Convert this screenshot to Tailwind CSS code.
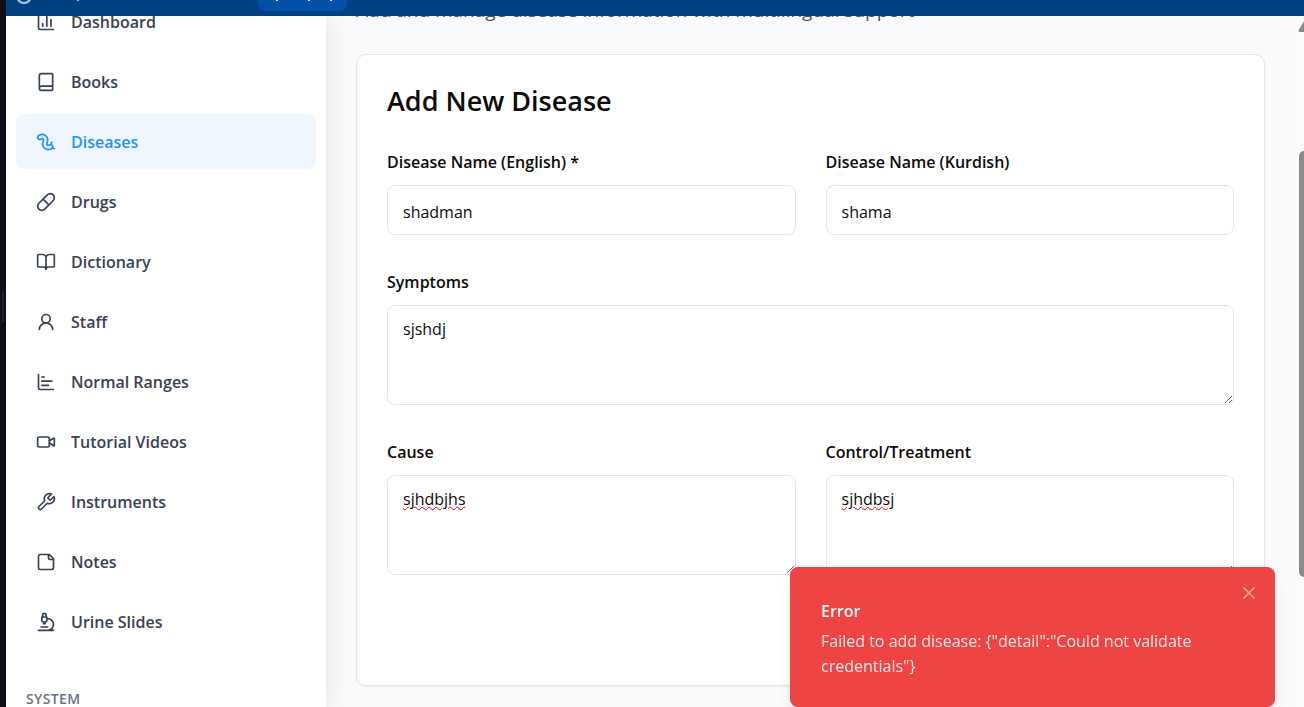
<!DOCTYPE html>
<html lang="en">
<head>
<meta charset="utf-8">
<title>Diseases</title>
<script src="https://cdn.jsdelivr.net/npm/@tailwindcss/browser@4"></script>
</head>
<body class="flex h-screen overflow-hidden bg-[#f9fafb] font-['Segoe_UI','Open_Sans',sans-serif] text-base text-[#0c0a09]">
<div class="flex w-[6px] shrink-0 flex-col justify-center bg-[#0f0f17] pb-[94px] pl-[2px]"><span class="h-[30px] w-[2px] bg-[#23232c]"></span></div>
<div class="flex min-w-0 flex-1 flex-col">
  <header class="relative z-10 flex h-4 shrink-0 items-end overflow-hidden bg-[#004281] pb-[5px] text-white">
    <div class="flex w-[252px] shrink-0 items-end gap-[45px] pl-[10px]">
      <svg class="mb-[7px] size-4 shrink-0" viewBox="0 0 16 16" fill="none" stroke="#a9cdf0" stroke-width="2" aria-hidden="true"><circle cx="8" cy="8" r="7"/></svg>
      <span class="mb-[10px] h-1 w-[2px] bg-[#a9bfd6]"></span>
    </div>
    <button type="button" aria-label="Menu" class="flex h-10 w-[89px] shrink-0 items-end rounded-lg bg-[#0052a8] pb-[10px] pl-[18px]">
      <svg class="h-1 w-[60px]" viewBox="0 0 60 4" stroke="#d5e2f0" stroke-width="2"><path d="M1 0V4M33 0V4M55 0V4"/></svg>
    </button>
  </header>
  <div class="flex min-h-0 flex-1">
    <aside class="relative z-1 w-80 shrink-0 overflow-hidden bg-white shadow-[0_0_25px_rgba(0,0,0,0.1)]">
      <nav class="-mt-[22px] flex flex-col gap-[5px] px-[10px] font-semibold text-[#374151]">
        <a href="#" class="flex h-[55px] items-center gap-[15px] rounded-lg px-5 leading-[25px]"><svg class="size-5 shrink-0" viewBox="0 0 24 24" fill="none" stroke="currentColor" stroke-width="2" stroke-linecap="round" stroke-linejoin="round"><path d="M3 3v16a2 2 0 0 0 2 2h16M18 17V9M13 17V5M8 17v-3"/></svg><span class="pt-px">Dashboard</span></a>
        <a href="#" class="flex h-[55px] items-center gap-[15px] rounded-lg px-5 leading-[25px]"><svg class="size-5 shrink-0" viewBox="0 0 24 24" fill="none" stroke="currentColor" stroke-width="2" stroke-linecap="round" stroke-linejoin="round"><path d="M4 19.5v-15A2.5 2.5 0 0 1 6.5 2H19a1 1 0 0 1 1 1v18a1 1 0 0 1-1 1H6.5a1 1 0 0 1 0-5H20"/></svg><span class="pt-px">Books</span></a>
        <a href="#" class="flex h-[55px] items-center gap-[15px] rounded-lg bg-[#eff6ff] px-5 leading-[25px] text-[#1e90ff]"><svg class="size-5 shrink-0" viewBox="0 0 24 24" fill="none" stroke="currentColor" stroke-width="2" stroke-linecap="round" stroke-linejoin="round"><path d="m19 12-1.5 3M19.63 18.81 22 20M6.47 8.23a1.68 1.68 0 0 1 2.44 1.93l-.64 2.08a6.76 6.76 0 0 0 10.16 7.67l.42-.27a1 1 0 1 0-2.73-4.21l-.42.27a1.76 1.76 0 0 1-2.63-1.99l.64-2.08A6.66 6.66 0 0 0 3.94 3.9l-.7.4a1 1 0 1 0 2.55 4.34z"/></svg><span class="pt-px">Diseases</span></a>
        <a href="#" class="flex h-[55px] items-center gap-[15px] rounded-lg px-5 leading-[25px]"><svg class="size-5 shrink-0" viewBox="0 0 24 24" fill="none" stroke="currentColor" stroke-width="2" stroke-linecap="round" stroke-linejoin="round"><path d="m10.5 20.5 10-10a4.95 4.95 0 1 0-7-7l-10 10a4.95 4.95 0 1 0 7 7ZM8.5 8.5l7 7"/></svg><span class="pt-px">Drugs</span></a>
        <a href="#" class="flex h-[55px] items-center gap-[15px] rounded-lg px-5 leading-[25px]"><svg class="size-5 shrink-0" viewBox="0 0 24 24" fill="none" stroke="currentColor" stroke-width="2" stroke-linecap="round" stroke-linejoin="round"><path d="M12 7v14M3 18a1 1 0 0 1-1-1V4a1 1 0 0 1 1-1h5a4 4 0 0 1 4 4 4 4 0 0 1 4-4h5a1 1 0 0 1 1 1v13a1 1 0 0 1-1 1h-6a3 3 0 0 0-3 3 3 3 0 0 0-3-3z"/></svg><span class="pt-px">Dictionary</span></a>
        <a href="#" class="flex h-[55px] items-center gap-[15px] rounded-lg px-5 leading-[25px]"><svg class="size-5 shrink-0" viewBox="0 0 24 24" fill="none" stroke="currentColor" stroke-width="2" stroke-linecap="round" stroke-linejoin="round"><circle cx="12" cy="8" r="5"/><path d="M20 21a8 8 0 0 0-16 0"/></svg><span class="pt-px">Staff</span></a>
        <a href="#" class="flex h-[55px] items-center gap-[15px] rounded-lg px-5 leading-[25px]"><svg class="size-5 shrink-0" viewBox="0 0 24 24" fill="none" stroke="currentColor" stroke-width="2" stroke-linecap="round" stroke-linejoin="round"><path d="M3 3v16a2 2 0 0 0 2 2h16M7 16h8M7 11h12M7 6h3"/></svg><span class="pt-px">Normal Ranges</span></a>
        <a href="#" class="flex h-[55px] items-center gap-[15px] rounded-lg px-5 leading-[25px]"><svg class="size-5 shrink-0" viewBox="0 0 24 24" fill="none" stroke="currentColor" stroke-width="2" stroke-linecap="round" stroke-linejoin="round"><path d="m16 13 5.223 3.482a.5.5 0 0 0 .777-.416V7.87a.5.5 0 0 0-.752-.432L16 10.5"/><rect x="2" y="6" width="14" height="12" rx="2"/></svg><span class="pt-px">Tutorial Videos</span></a>
        <a href="#" class="flex h-[55px] items-center gap-[15px] rounded-lg px-5 leading-[25px]"><svg class="size-5 shrink-0" viewBox="0 0 24 24" fill="none" stroke="currentColor" stroke-width="2" stroke-linecap="round" stroke-linejoin="round"><path d="M14.7 6.3a1 1 0 0 0 0 1.4l1.6 1.6a1 1 0 0 0 1.4 0l3.77-3.77a6 6 0 0 1-7.94 7.94l-6.91 6.91a2.12 2.12 0 0 1-3-3l6.91-6.91a6 6 0 0 1 7.94-7.94l-3.76 3.76z"/></svg><span class="pt-px">Instruments</span></a>
        <a href="#" class="flex h-[55px] items-center gap-[15px] rounded-lg px-5 leading-[25px]"><svg class="size-5 shrink-0" viewBox="0 0 24 24" fill="none" stroke="currentColor" stroke-width="2" stroke-linecap="round" stroke-linejoin="round"><path d="M16 3H5a2 2 0 0 0-2 2v14a2 2 0 0 0 2 2h14a2 2 0 0 0 2-2V8ZM15 3v4a2 2 0 0 0 2 2h4"/></svg><span class="pt-px">Notes</span></a>
        <a href="#" class="flex h-[55px] items-center gap-[15px] rounded-lg px-5 leading-[25px]"><svg class="size-5 shrink-0" viewBox="0 0 24 24" fill="none" stroke="currentColor" stroke-width="2" stroke-linecap="round" stroke-linejoin="round"><path d="M6 18h8M3 22h18M14 22a7 7 0 1 0 0-14h-1M9 14h2M9 12a2 2 0 0 1-2-2V6h6v4a2 2 0 0 1-2 2ZM12 6V3a1 1 0 0 0-1-1H9a1 1 0 0 0-1 1v3"/></svg><span class="pt-px">Urine Slides</span></a>
        <h3 class="px-[10px] pt-[35px] text-sm tracking-wide text-[#6b7280]">SYSTEM</h3>
      </nav>
    </aside>
    <main class="min-w-0 flex-1 overflow-hidden px-[30px]">
      <p class="-mt-[21px] text-[19px] leading-[30px] text-[#4b5563]">Add and manage disease information with multilingual support</p>
      <form class="mt-[29px] flex h-[632px] flex-col rounded-[10px] border border-[#e7e5e4] bg-white px-[30px] pt-[29px] shadow-xs">
        <h2 class="text-[27px] leading-[34px] font-semibold">Add New Disease</h2>
        <div class="mt-8 grid grid-cols-2 gap-x-[30px] gap-y-[35px] font-semibold">
          <div class="flex flex-col gap-[10px]"><label for="en" class="leading-[25px]">Disease Name (English) *</label><input id="en" value="shadman" class="h-[50px] rounded-lg border border-[#e5e5e5] px-[15px] pt-1 font-normal"></div>
          <div class="flex flex-col gap-[10px]"><label for="ku" class="leading-[25px]">Disease Name (Kurdish)</label><input id="ku" value="shama" class="h-[50px] rounded-lg border border-[#e5e5e5] px-[15px] pt-1 font-normal"></div>
          <div class="col-span-2 flex flex-col gap-[10px]"><label for="sy" class="leading-[25px]">Symptoms</label><textarea id="sy" class="h-[100px] rounded-lg border border-[#e5e5e5] px-[15px] py-[11px] font-normal" spellcheck="false">sjshdj</textarea></div>
          <div class="flex flex-col gap-[10px]"><label for="ca" class="leading-[25px]">Cause</label><textarea id="ca" class="h-[100px] rounded-lg border border-[#e5e5e5] px-[15px] py-[11px] font-normal underline decoration-red-600 decoration-wavy decoration-1" spellcheck="false">sjhdbjhs</textarea></div>
          <div class="flex flex-col gap-[10px]"><label for="co" class="leading-[25px]">Control/Treatment</label><textarea id="co" class="h-[100px] rounded-lg border border-[#e5e5e5] px-[15px] py-[11px] font-normal underline decoration-red-600 decoration-wavy decoration-1" spellcheck="false">sjhdbsj</textarea></div>
        </div>
      </form>
    </main>
    <div class="flex w-[9px] shrink-0 flex-col items-end overflow-hidden bg-[#fcfcfc]" aria-hidden="true">
      <svg class="mt-[6px] h-[10px] w-[9px] shrink-0" viewBox="0 0 9 10"><path d="M4 10Q3 9 4 7.500L8.500 0H9V10Z" fill="#8b8b8b"/></svg>
      <div class="mt-[119px] h-[426px] w-[5px] shrink-0 rounded-l-[5px] bg-[#8b8b8b]"></div>
    </div>
  </div>
</div>
<div role="alert" class="fixed right-[29px] bottom-0 z-20 h-[140px] w-[485px] rounded-lg bg-[#ef4444] px-[31px] pt-8 text-[#fafafa] shadow-lg">
  <p class="leading-[25px] font-semibold">Error</p>
  <p class="mt-[5px] pr-[15px] leading-[25px] opacity-90">Failed to add disease: {"detail":"Could not validate credentials"}</p>
  <button type="button" aria-label="Close" class="absolute top-4 right-4 text-[#fca5a5]"><svg class="size-5" viewBox="0 0 24 24" fill="none" stroke="currentColor" stroke-width="2" stroke-linecap="round"><path d="M18 6 6 18M6 6l12 12"/></svg></button>
</div>
</body>
</html>
